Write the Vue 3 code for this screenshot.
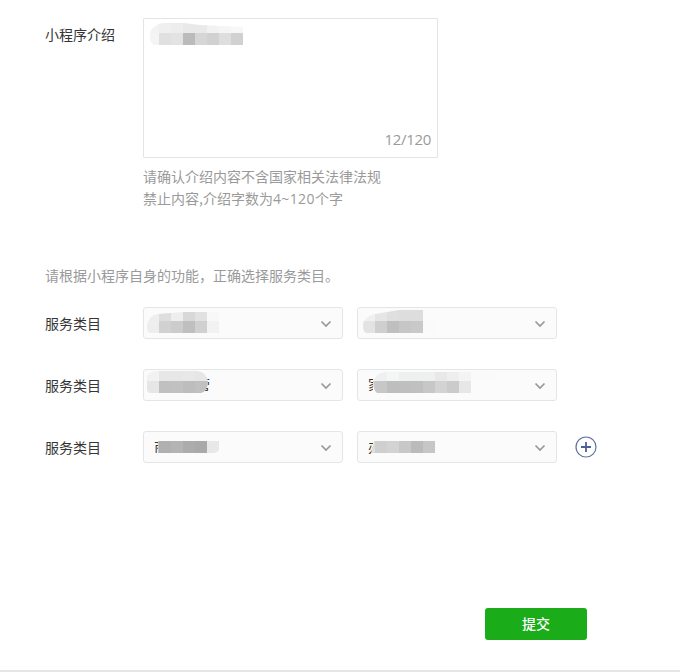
<script setup>
import { ref } from 'vue'

const intro = {
  id: 'intro', x: 6, top: 4, mid: 14, end: 26, first: 9,
  clip: 'M15 5Q20 3 40 4L56 6L99 8V26H12Q6 26 6 17Q6 8 15 5Z',
  upper: ['#f3f3f3', '#efefef', '#ededed', '#e9e9e9', '#e9e9e9', '#f2f2f2', '#f5f5f5', '#f7f7f7'],
  lower: ['#f4f4f4', '#e0e0e0', '#e3e3e3', '#bbbbbb', '#d6d6d6', '#d1d1d1', '#dedede', '#d1d1d1'],
}

const rows = ref([
  [
    {
      id: 'a1', x: 3, top: 4, mid: 13, end: 25, first: 12,
      clip: 'M14 6L39 4H75V25H6Q3 25 3 19Q3 8 14 6Z',
      upper: ['#eeeeee', '#dedede', '#eeeeee', '#d8d8d8', '#e1e1e1', '#f8f8f8'],
      lower: ['#eeeeee', '#d1d1d1', '#cccccc', '#bfbfbf', '#d0d0d0', '#f2f2f2'],
    },
    {
      id: 'a2', x: 5, top: 2, mid: 13, end: 25, first: 12,
      clip: 'M17 6L41 2H65V13H77V25H9Q5 25 5 17Q5 9 17 6Z',
      upper: ['#f0f0f0', '#e5e5e5', '#dfdfdf', '#dddddd', '#dddddd', '#fbfbfb'],
      lower: ['#e3e3e3', '#cfcfcf', '#bfbfbf', '#c6c6c6', '#c9c9c9', '#fafafa'],
    },
  ],
  [
    {
      id: 'b1', x: 3, top: 1, mid: 11, end: 23, first: 12,
      glyph: '营', gx: 52, gy: 20, shown: 'M60 9H67V21H60Z',
      clip: 'M12 1H53Q63 2 64 12Q63 22 57 23H7Q3 23 3 19V7Q4 2 12 1Z',
      upper: ['#f2f2f2', '#e7e7e7', '#e7e7e7', '#e8e8e8', '#e6e6e6', '#e8e8e8'],
      lower: ['#e6e6e6', '#c0c0c0', '#c1c1c1', '#bdbdbd', '#c0c0c0', '#c5c5c5'],
    },
    {
      id: 'b2', x: 15, top: 1, mid: 11, end: 23, first: 2,
      glyph: '家', gx: 10, gy: 20, shown: 'M10 9H15V21H10Z',
      clip: 'M27 2H133Q142 4 142 14H113V23H19Q15 20 15 11Q18 3 27 2Z',
      upper: ['#f1f1f1', '#f0f0f0', '#f4f6f5', '#eeefef', '#eef0ef', '#eef0ef', '#e8e8e8', '#eeeeee', '#f4f4f4', '#f9faf9', '#f9faf9'],
      lower: ['#d0d0d0', '#c7c7c7', '#bebebe', '#bfbfbf', '#c0c0c0', '#c7c7c7', '#d3d3d3', '#cbcbcb', '#e7e7e7', '#fbfbfb', '#fbfbfb'],
    },
  ],
  [
    {
      id: 'c1', x: 14, top: 9, mid: 9, end: 21, first: 1,
      glyph: '商', gx: 10, gy: 20, shown: 'M10 9H14V21H10Z',
      clip: 'M14 9H75V18Q73 21 70 21H14Z', upper: [],
      lower: ['#c4c4c4', '#b0b0b0', '#b4b4b4', '#acacac', '#a9a9a9', '#e8e8e8'],
    },
    {
      id: 'c2', x: 13, top: 9, mid: 9, end: 21, first: 4,
      glyph: '办', gx: 10, gy: 20, shown: 'M10 9H15V22H10Z',
      clip: 'M16 9H77V21H13Z', upper: [],
      lower: ['#dedede', '#cfcfcf', '#d3d3d3', '#c8c8c8', '#bbbbbb', '#c6c6c6'],
    },
  ],
])

function tiles(m) {
  const build = (colors, y, h) =>
    colors.map((fill, i) => ({
      fill, y, h,
      x: i === 0 ? m.x : m.x + m.first + (i - 1) * 12,
      w: i === 0 ? m.first : 12,
    }))
  return [...build(m.upper, m.top, m.mid - m.top), ...build(m.lower, m.mid, m.end - m.mid)]
}
</script>

<template>
  <main class="page">
    <section class="intro">
      <span class="label intro-label">小程序介绍</span>
      <div class="intro-body">
        <div class="textarea">
          <svg class="mosaic" width="293" height="60" shape-rendering="crispEdges">
            <clipPath :id="intro.id"><path :d="intro.clip" /></clipPath>
            <g :clip-path="`url(#${intro.id})`">
              <rect v-for="(t, i) in tiles(intro)" :key="i" :x="t.x" :y="t.y" :width="t.w" :height="t.h" :fill="t.fill" />
            </g>
          </svg>
          <span class="count">12/120</span>
        </div>
        <p class="hint">请确认介绍内容不含国家相关法律法规<br />禁止内容,介绍字数为<span class="num">4~120</span>个字</p>
      </div>
    </section>

    <p class="notice">请根据小程序自身的功能，正确选择服务类目。</p>

    <section class="categories">
      <div v-for="(row, r) in rows" :key="r" class="row">
        <span class="label">服务类目</span>
        <div v-for="m in row" :key="m.id" class="select">
          <svg class="mosaic" width="160" height="30">
            <g v-if="m.glyph" :clip-path="`url(#${m.id}-glyph)`">
              <clipPath :id="`${m.id}-glyph`"><path :d="m.shown" /></clipPath>
              <text class="glyph" :x="m.gx" :y="m.gy">{{ m.glyph }}</text>
            </g>
            <clipPath :id="m.id"><path :d="m.clip" /></clipPath>
            <g :clip-path="`url(#${m.id})`" shape-rendering="crispEdges">
              <rect v-for="(t, i) in tiles(m)" :key="i" :x="t.x" :y="t.y" :width="t.w" :height="t.h" :fill="t.fill" />
            </g>
          </svg>
          <svg class="chevron" width="12" height="8" viewBox="0 0 12 8">
            <path d="M1.5 1.5L6 6L10.5 1.5" fill="none" stroke="#999" stroke-width="1.7" />
          </svg>
        </div>
        <svg v-if="r === rows.length - 1" class="add" width="22" height="22" viewBox="0 0 22 22">
          <circle cx="11" cy="11" r="10" fill="none" stroke="#5f739f" stroke-width="1.2" />
          <path d="M6 11H16M11 6V16" stroke="#4a6196" stroke-width="1.8" />
        </svg>
      </div>
    </section>

    <footer class="footer">
      <button class="submit">提交</button>
    </footer>
  </main>
</template>

<style>
body {
  background: #fff;
}
</style>

<style scoped>
.page {
  box-sizing: border-box;
  width: 680px;
  height: 672px;
  padding: 18px 0 0 45px;
  display: flex;
  flex-direction: column;
  overflow: hidden;
  color: #353535;
  font: 14px/22px "Noto Sans CJK SC", sans-serif;
}
.intro {
  display: flex;
  height: 246px;
}
.label {
  width: 98px;
  flex: none;
}
.intro-label {
  padding-top: 5px;
}
.textarea {
  box-sizing: border-box;
  width: 295px;
  height: 140px;
  border: 1px solid #e4e4e4;
  border-radius: 1px;
  display: flex;
  flex-direction: column;
  justify-content: space-between;
}
.mosaic {
  display: block;
  flex: none;
}
.count {
  align-self: flex-end;
  padding: 0 6px 7px 0;
  color: #9a9a9a;
  font: 15px/22px "Open Sans", sans-serif;
  letter-spacing: -0.3px;
}
.hint {
  margin: 7px 0 0;
  color: #9a9a9a;
  white-space: nowrap;
}
.num {
  font-family: "Open Sans", sans-serif;
  letter-spacing: 0.4px;
}
.notice {
  margin: 0;
  color: #9a9a9a;
}
.categories {
  margin-top: 21px;
  display: flex;
  flex-direction: column;
  gap: 30px;
}
.row {
  display: flex;
  align-items: center;
  height: 32px;
}
.select {
  box-sizing: border-box;
  width: 200px;
  height: 32px;
  margin-right: 14px;
  border: 1px solid #e4e6e6;
  border-radius: 3px;
  background: #fbfbfb;
  display: flex;
  align-items: center;
  justify-content: space-between;
  padding-right: 10px;
}
.glyph {
  font-size: 14px;
  fill: #353535;
}
.chevron,
.add {
  flex: none;
}
.chevron {
  margin-top: 2px;
}
.add {
  margin-left: 4px;
}
.footer {
  box-sizing: border-box;
  height: 64px;
  margin: auto 0 0 -45px;
  padding-left: 485px;
  border-bottom: 2px solid #e6e6e6;
}
.submit {
  display: block;
  width: 102px;
  height: 32px;
  padding: 0 0 2px;
  border: 0;
  border-radius: 3px;
  background: #1aad19;
  color: #fff;
  font: 500 14px/30px "Noto Sans CJK SC", sans-serif;
}
</style>
